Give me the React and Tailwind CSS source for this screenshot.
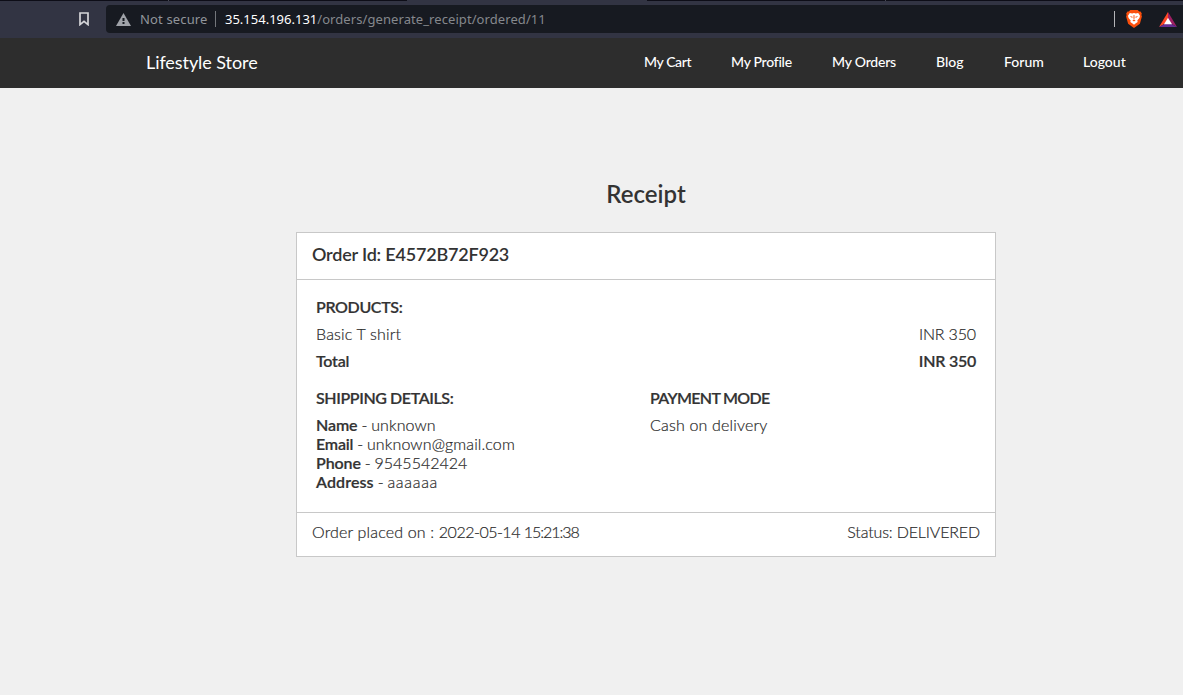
import React from "react";

const navItems = [
  { label: "My Cart", box: "w-[47px] tracking-[-0.4px]" },
  { label: "My Profile", box: "w-[61px] tracking-[-0.27px]" },
  { label: "My Orders", box: "w-[64px] tracking-[-0.2px]" },
  { label: "Blog", box: "w-[28px]" },
  { label: "Forum", box: "w-[39px]" },
  { label: "Logout", box: "w-[43px]" },
];

const shipping = [
  { label: "Name", value: "unknown", labelSpacing: "tracking-[-0.1px]", valueSpacing: "tracking-[0.1px]" },
  { label: "Email", value: "unknown@gmail.com", labelSpacing: "tracking-[-0.2px]", valueSpacing: "tracking-[0.12px]" },
  { label: "Phone", value: "9545542424", labelSpacing: "tracking-[-0.1px]", valueSpacing: "tracking-[0px]" },
  { label: "Address", value: "aaaaaa", labelSpacing: "tracking-[0.1px]", valueSpacing: "tracking-[0.7px]" },
];

function BookmarkIcon() {
  return (
    <svg className="ml-[79px] h-[14px] w-[10px] shrink-0" viewBox="0 0 10 14" fill="none" stroke="#d5d5d9" strokeWidth="1.7">
      <path d="M1 1h8v11.6L5 9.4 1 12.6z" />
    </svg>
  );
}

function WarningIcon() {
  return (
    <svg className="h-[13px] w-[15px] shrink-0" viewBox="0 0 15 13">
      <path d="M7.5 0 15 13H0z" fill="#9fa2a8" />
      <path d="M6.5 5h2v3h-2zM6.5 9h2v2h-2z" fill="#171a21" />
    </svg>
  );
}

function BraveIcon() {
  return (
    <svg className="h-[18px] w-4 shrink-0" viewBox="0 0 16 18">
      <path d="M4.3 0h7.4l1.5 1.6 1.3-.1 1.3 2-.4 1.4.5 1.5-2 7.3L8 18l-5.9-4.3-2-7.3.5-1.5-.4-1.4 1.3-2 1.3.1z" fill="#fb4f0c" />
      <path d="m3.8 3.1 2.4.5L8 3.1l1.8.5 2.4-.5 1.8 2.7-.6 2.1-2.1 2.5.4 1.5-2.2 1.5L8 14.7l-1.5-1.3-2.2-1.5.4-1.5-2.1-2.5L2 5.8z" fill="#fff" />
      <path d="m3.7 6.1 2.9.6-.4 1.3zM12.3 6.1l-2.9.6.4 1.3zM6.4 10.3 8 9.5l1.6.8L8 11.5zM7.6 5h.8l.2 3.7H7.4z" fill="#fb4f0c" />
    </svg>
  );
}

function TriangleIcon() {
  return (
    <svg className="h-[15px] w-[18px] shrink-0" viewBox="0 0 18 15">
      <path d="M9 0 0 15l9-5z" fill="#ff4724" />
      <path d="m9 0 9 15-9-5z" fill="#9e1f63" />
      <path d="m0 15 9-5 9 5z" fill="#662d91" />
      <path d="m9 5.7 4 6.6H5z" fill="#fff" />
    </svg>
  );
}

function BrowserBar() {
  return (
    <div className="h-[38px] bg-[#323443]">
      <div className="flex h-px bg-[#0d0d17]">
        <div className="ml-[168px] w-px bg-[#464754]" />
        <div className="ml-[238px] w-[240px] bg-[#323443]" />
        <div className="ml-[238px] w-px bg-[#464754]" />
      </div>
      <div className="flex h-9 items-center">
        <BookmarkIcon />
        <div className="ml-[17px] flex h-7 flex-1 items-center rounded-l bg-[#171a21] pl-[10px] font-['Noto_Sans',sans-serif] text-[13px]">
          <WarningIcon />
          <span className="ml-[9px] w-[67px] whitespace-nowrap pt-px tracking-[0.15px] text-[#91959b]">Not secure</span>
          <div className="ml-2 h-4 w-px bg-[#73767b]" />
          <span className="ml-[9px] whitespace-nowrap pt-px text-[#85888d]">
            <span className="text-white">35.154.196.131</span>
            <span className="tracking-[0.08px]">/orders/generate_receipt/ordered/11</span>
          </span>
          <div className="ml-auto mr-[11px] h-4 w-px bg-[#b4b5b8]" />
          <BraveIcon />
          <div className="w-[17px]" />
          <TriangleIcon />
          <div className="w-[6px]" />
        </div>
      </div>
    </div>
  );
}

function NavBar() {
  return (
    <nav className="flex h-[50px] items-center bg-[#2d2d2d] pb-[3px] pl-[146px] pr-[57px] text-white">
      <span className="whitespace-nowrap text-[18px] leading-6 tracking-[-0.07px]">Lifestyle Store</span>
      <div className="ml-auto flex gap-10 text-[14px] font-medium">
        {navItems.map((item) => (
          <a key={item.label} className={`${item.box} whitespace-nowrap`}>
            {item.label}
          </a>
        ))}
      </div>
    </nav>
  );
}

export default function App() {
  return (
    <div className="h-[695px] overflow-hidden bg-[#f0f0f0] font-[Lato,sans-serif] text-[#333]">
      <BrowserBar />
      <NavBar />
      <main className="ml-[296px] w-[700px] pt-[91px]">
        <h1 className="text-center text-[24px] font-semibold leading-[30px]">Receipt</h1>
        <section className="mt-[23px] border border-[#c8c8c8] bg-white">
          <header className="h-[47px] border-b border-[#c8c8c8] px-[15px] pt-[10px] text-[18px] font-semibold leading-[22px] tracking-[-0.2px]">
            Order Id: E4572B72F923
          </header>
          <div className="h-[233px] border-b border-[#c8c8c8] px-[19px] pt-[17px] text-[16px] font-light leading-[19px] text-[#2b2b2b] [-webkit-text-stroke:0.2px]">
            <h2 className="mb-2 font-semibold tracking-[-0.36px] text-[#333]">PRODUCTS:</h2>
            <div className="mb-2 flex justify-between">
              <span className="tracking-[0.18px]">Basic T shirt</span>
              <span className="tracking-[-0.15px]">INR 350</span>
            </div>
            <div className="flex justify-between font-semibold tracking-[-0.25px] text-[#333]">
              <span>Total</span>
              <span>INR 350</span>
            </div>
            <div className="mt-[18px] grid grid-cols-[334px_1fr]">
              <div>
                <h2 className="mb-2 font-semibold tracking-[-0.4px] text-[#333]">SHIPPING DETAILS:</h2>
                {shipping.map((row) => (
                  <p key={row.label}>
                    <span className={`font-semibold text-[#333] ${row.labelSpacing}`}>{row.label}</span>
                    <span className="tracking-[-0.3px]"> - </span>
                    <span className={row.valueSpacing}>{row.value}</span>
                  </p>
                ))}
              </div>
              <div>
                <h2 className="mb-2 font-semibold tracking-[-0.68px] text-[#333]">PAYMENT MODE</h2>
                <p className="tracking-[0.18px]">Cash on delivery</p>
              </div>
            </div>
          </div>
          <footer className="flex h-[43px] justify-between px-[15px] pt-[9px] text-[16px] font-light leading-[19px] text-[#2b2b2b] [-webkit-text-stroke:0.2px]">
            <span className="tracking-[0.17px]">
              Order placed on : <span className="tracking-[-0.5px]">2022-05-14 </span>
              <span className="tracking-[-1.05px]">15:21:38</span>
            </span>
            <span className="tracking-[-0.15px]">Status: DELIVERED</span>
          </footer>
        </section>
      </main>
    </div>
  );
}
